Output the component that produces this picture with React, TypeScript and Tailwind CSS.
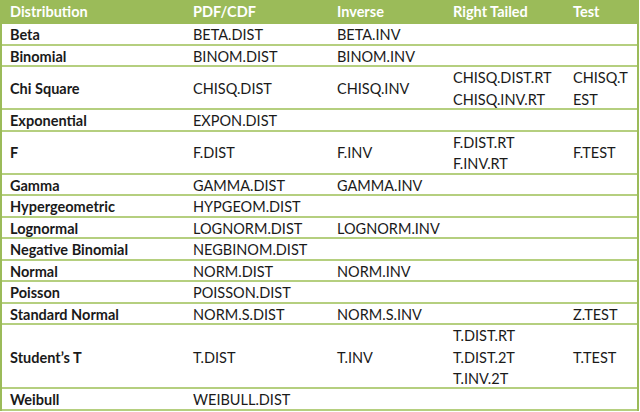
import React from "react";

type Row = { name: string; cells: string[][]; h: string };

const rows: Row[] = [
  { name: "Beta", cells: [["BETA.DIST"], ["BETA.INV"], [], []], h: "h-[21.5px]" },
  { name: "Binomial", cells: [["BINOM.DIST"], ["BINOM.INV"], [], []], h: "h-[21.5px]" },
  { name: "Chi Square", cells: [["CHISQ.DIST"], ["CHISQ.INV"], ["CHISQ.DIST.RT", "CHISQ.INV.RT"], ["CHISQ.T", "EST"]], h: "h-[43px]" },
  { name: "Exponential", cells: [["EXPON.DIST"], [], [], []], h: "h-[21.5px]" },
  { name: "F", cells: [["F.DIST"], ["F.INV"], ["F.DIST.RT", "F.INV.RT"], ["F.TEST"]], h: "h-[43px]" },
  { name: "Gamma", cells: [["GAMMA.DIST"], ["GAMMA.INV"], [], []], h: "h-[21.5px]" },
  { name: "Hypergeometric", cells: [["HYPGEOM.DIST"], [], [], []], h: "h-[21.5px]" },
  { name: "Lognormal", cells: [["LOGNORM.DIST"], ["LOGNORM.INV"], [], []], h: "h-[21.5px]" },
  { name: "Negative Binomial", cells: [["NEGBINOM.DIST"], [], [], []], h: "h-[21.5px]" },
  { name: "Normal", cells: [["NORM.DIST"], ["NORM.INV"], [], []], h: "h-[21.5px]" },
  { name: "Poisson", cells: [["POISSON.DIST"], [], [], []], h: "h-[21.5px]" },
  { name: "Standard Normal", cells: [["NORM.S.DIST"], ["NORM.S.INV"], [], ["Z.TEST"]], h: "h-[21.5px]" },
  { name: "Student\u2019s T", cells: [["T.DIST"], ["T.INV"], ["T.DIST.RT", "T.DIST.2T", "T.INV.2T"], ["T.TEST"]], h: "h-[64px]" },
  { name: "Weibull", cells: [["WEIBULL.DIST"], [], [], []], h: "h-[21.5px]" },
];

const cols = "grid grid-cols-[183px_144px_116px_120px_1fr]";

export default function App() {
  return (
    <div
      className="w-[640px] h-[412px] bg-white text-[14.5px] leading-[21.5px] text-[#1a1a1a]"
      style={{ fontFamily: "Lato, 'Liberation Sans', sans-serif" }}
    >
      <div className="w-[639px] border-x-2 border-[#9bbb59]">
        <div className={`${cols} h-[24px] bg-[#9bbb59] text-white font-bold items-center`}>
          <div className="pl-2">Distribution</div>
          <div className="pl-2">PDF/CDF</div>
          <div className="pl-2">Inverse</div>
          <div className="pl-2">Right Tailed</div>
          <div className="pl-2">Test</div>
        </div>
        {rows.map((r) => (
          <div key={r.name} className={`${cols} ${r.h} border-b-2 border-[#b5cf7f] items-center`}>
            <div className="pl-2 font-bold">{r.name}</div>
            {r.cells.map((c, i) => (
              <div key={i} className="pl-2 flex flex-col">
                {c.map((t) => (
                  <span key={t}>{t}</span>
                ))}
              </div>
            ))}
          </div>
        ))}
      </div>
    </div>
  );
}
